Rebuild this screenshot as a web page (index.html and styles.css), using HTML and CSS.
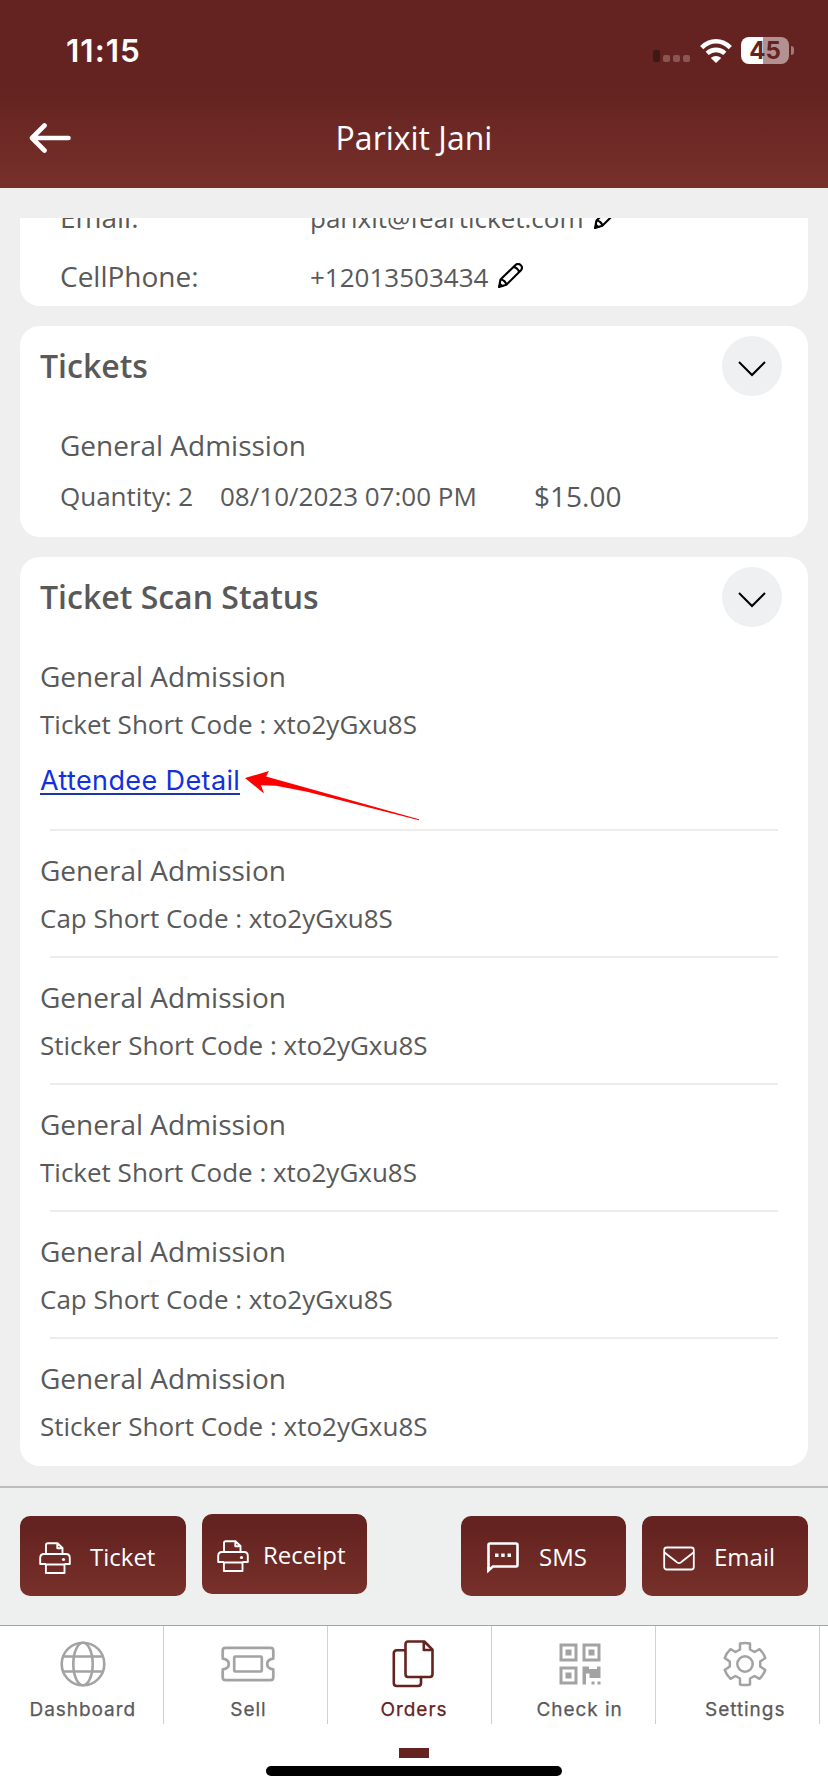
FILE: index.html
```html
<!DOCTYPE html>
<html lang="en">
<head>
<meta charset="utf-8">
<title>Order details</title>
<link rel="stylesheet" href="styles.css">
</head>
<body>
<svg class="defs" aria-hidden="true">
  <symbol id="chevron" viewBox="0 0 28 16"><path d="M1 1l13 13L27 1" fill="none" stroke="#000" stroke-width="2"/></symbol>
  <symbol id="pencil" viewBox="0 0 25 25"><path d="M1 24L2.500 16.500L17.500 2C19 .6 21 .6 22.600 2C24.300 3.600 24.300 5.700 23 7.200L8.300 21.800ZM2.500 16.500C5 16.500 8.300 19 8.300 21.800M15.500 4C18 4.200 20.800 6.500 21 9.200" fill="none" stroke="#000" stroke-width="2.100" stroke-linejoin="round"/><path d="M.5 24.500l1-5.500 4.500 4.300z"/></symbol>
  <symbol id="printer" viewBox="0 0 32 32"><g fill="none" stroke="#fff" stroke-width="1.900" stroke-linejoin="round"><path d="M7 12V3Q7 1.200 8.800 1.200H18.500L23.500 6V12M18.300 1.500V6.300H23.200"/><path d="M7 22H1.200V16Q1.200 12 5 12H27Q30.800 12 30.800 16V22H25.500"/><path d="M6.900 22.500H25.500V31H6.900Z"/></g><circle cx="24.500" cy="17.500" r="1.600" fill="#fff"/></symbol>
</svg>
<div class="screen">
  <header class="top">
    <div class="status">
      <span class="time">11:15</span>
      <div class="indicators">
        <svg class="signal" viewBox="0 0 38 12"><rect x="0" y="0" width="7" height="12" rx="2" fill="#3f1815"/><g fill="#8a5654"><rect x="10" y="5" width="7" height="7" rx="2"/><rect x="20" y="5" width="7" height="7" rx="2"/><rect x="30" y="5" width="7" height="7" rx="2"/></g></svg>
        <svg class="wifi" viewBox="0 0 32 24"><g fill="none" stroke="#fff" stroke-width="4.600"><path d="M1.700 8.600Q8 2.300 16 2.300T30.300 8.600"/><path d="M7.200 14.400Q11 10.900 16 10.900T24.800 14.400"/></g><path d="M16 24l-5.200-5.100Q13 17 16 17T21.200 18.900Z" fill="#fff"/></svg>
        <div class="battery"><span>45</span></div><i class="cap"></i>
      </div>
    </div>
    <div class="titlebar">
      <svg class="back" viewBox="0 0 42 30"><path d="M15.500 2.500L3 15L15.500 27.500M3.500 15H39.500" fill="none" stroke="#fff" stroke-width="4.600" stroke-linecap="round" stroke-linejoin="round"/></svg>
      <h1>Parixit Jani</h1>
    </div>
  </header>

  <main class="scroll">
    <section class="card contact">
      <div class="field"><span class="key">Email:</span><span class="val">parixit@fearticket.com</span><svg class="pencil"><use href="#pencil"/></svg></div>
      <div class="field"><span class="key">CellPhone:</span><span class="val">+12013503434</span><svg class="pencil"><use href="#pencil"/></svg></div>
    </section>

    <section class="card tickets">
      <div class="head"><h2>Tickets</h2><button class="toggle"><svg><use href="#chevron"/></svg></button></div>
      <div class="order">
        <p class="name">General Admission</p>
        <div class="line"><span class="qty">Quantity: 2</span><span class="date">08/10/2023 07:00 PM</span><span class="price">$15.00</span></div>
      </div>
    </section>

    <section class="card scans">
      <div class="head"><h2>Ticket Scan Status</h2><button class="toggle"><svg><use href="#chevron"/></svg></button></div>
      <div class="scan first">
        <p class="name">General Admission</p><p class="code">Ticket Short Code : xto2yGxu8S</p>
        <div class="linkrow"><a class="link">Attendee Detail</a>
          <svg class="arrow" viewBox="0 0 174 50"><path d="M0 7L24 0L21 5.500L174 48.300V49.300L62 20.800L31 14.700L16 14.300L19 22.500Z" fill="#f00"/></svg></div>
      </div>
      <div class="scan"><p class="name">General Admission</p><p class="code">Cap Short Code : xto2yGxu8S</p></div>
      <div class="scan"><p class="name">General Admission</p><p class="code">Sticker Short Code : xto2yGxu8S</p></div>
      <div class="scan"><p class="name">General Admission</p><p class="code">Ticket Short Code : xto2yGxu8S</p></div>
      <div class="scan"><p class="name">General Admission</p><p class="code">Cap Short Code : xto2yGxu8S</p></div>
      <div class="scan"><p class="name">General Admission</p><p class="code">Sticker Short Code : xto2yGxu8S</p></div>
    </section>
  </main>

  <div class="actions">
    <button class="action ticket"><svg><use href="#printer"/></svg><span>Ticket</span></button>
    <button class="action receipt"><svg><use href="#printer"/></svg><span>Receipt</span></button>
    <button class="action sms"><svg viewBox="0 0 32 32"><path d="M1.500 28V3Q1.500 1.500 3 1.500H29Q30.500 1.500 30.500 3V23Q30.500 24.500 29 24.500H6Z" fill="none" stroke="#fff" stroke-width="2.600"/><path d="M.3 25V31.500L6.500 25Z" fill="#fff"/><path d="M8 11.500h3.500V15H8zM14.200 11.500h3.500V15h-3.500zM20.500 11.500H24V15h-3.500z" fill="#fff"/></svg><span>SMS</span></button>
    <button class="action email"><svg viewBox="0 0 32 32"><g fill="none" stroke="#fff" stroke-width="1.800"><rect x="1.200" y="5.500" width="29.600" height="22" rx="2.500"/><path d="M1.500 10.500L13 19.500Q16 22.800 19 19.500L30.500 10.500"/></g></svg><span>Email</span></button>
  </div>

  <nav class="tabs">
    <a class="tab"><svg viewBox="0 0 54 48"><g fill="none" stroke="#a3a3a3" stroke-width="2.600"><circle cx="27" cy="24" r="21.300"/><ellipse cx="27" cy="24" rx="9.700" ry="21.300"/><path d="M7 16.500H47M7 31.500H47"/></g></svg><span>Dashboard</span></a>
    <a class="tab"><svg viewBox="0 0 54 48"><g fill="none" stroke="#a3a3a3" stroke-width="2.700" stroke-linejoin="round"><path d="M4.500 7.800H49.500Q52.300 7.800 52.300 10.500V18.600Q46.200 19.500 46.200 24T52.300 29.400V37.500Q52.300 40.200 49.500 40.200H4.500Q1.700 40.200 1.700 37.500V29.400Q7.800 28.500 7.800 24T1.700 18.600V10.500Q1.700 7.800 4.500 7.800Z"/><rect x="13.200" y="16.500" width="27.600" height="15" rx="1"/></g></svg><span>Sell</span></a>
    <a class="tab active"><svg viewBox="0 0 54 48"><g fill="none" stroke="#642320" stroke-width="2.600" stroke-linejoin="round" transform="translate(1.500 0)"><path d="M19.500 1.500H35.800L44 9.700V34Q44 37 41.200 37H19.500Q17 37 17 34V4.500Q17 1.500 19.500 1.500Z"/><path d="M35.300 1.500V10H43.700M17 10.300H8.300Q5.300 10.300 5.300 13.300V43Q5.300 46 8.300 46H29.500Q32.500 46 32.500 43V37"/></g></svg><span>Orders</span></a>
    <a class="tab"><svg viewBox="0 0 54 48"><g fill="none" stroke="#a3a3a3" stroke-width="3"><path d="M8 5h15v15H8zM31 5h15v15H31zM8 28h15v15H8z"/></g><path d="M12.500 9.500h6v6h-6zM35.500 9.500h6v6h-6zM12.500 32.500h6v6h-6zM29.500 26.500H36V29h8V26.500H47.500V38H36.500V33.500H33V44.500H29.500ZM38.500 41.500h3v3h-3zM44.500 41.500h3v3h-3z" fill="#a3a3a3"/></svg><span>Check in</span></a>
    <a class="tab"><svg viewBox="0 0 54 48"><g fill="none" stroke="#a3a3a3" stroke-width="2.500" stroke-linejoin="round"><path d="M22 3.500Q27 2.300 32 3.500V9.500L36.500 12L41.500 9.200Q45.500 13 47.300 18L42.200 21.500V26.500L47.300 30Q45.500 35 41.500 38.800L36.500 36L32 38.500V44.500Q27 45.700 22 44.500V38.500L17.500 36L12.500 38.800Q8.500 35 6.700 30L11.800 26.500V21.500L6.700 18Q8.500 13 12.500 9.200L17.500 12L22 9.500Z"/><circle cx="27" cy="24" r="7.700"/></g></svg><span>Settings</span></a>
  </nav>
  <footer class="bottom"><i class="marker"></i><i class="home"></i></footer>
</div>
</body>
</html>
```
FILE: styles.css
```css
* { box-sizing: border-box; }
body, h1, h2, p { margin: 0; }
button { border: 0; padding: 0; }
svg { display: block; flex: none; }
.defs { position: absolute; width: 0; height: 0; }

.screen {
  width: 828px;
  height: 1792px;
  display: flex;
  flex-direction: column;
  overflow: hidden;
  background: #efefef;
  color: #595959;
  font-family: "Open Sans", "Noto Sans", sans-serif;
}

/* Header */
.top {
  height: 188px;
  flex: none;
  color: #fff;
  background: linear-gradient(#642320 0, #642320 88px, #78302a 188px);
}
.status {
  height: 88px;
  padding: 13px 34px 0 66px;
  display: flex;
  align-items: center;
  justify-content: space-between;
}
.time { font: 600 31.500px/40px Inter, sans-serif; letter-spacing: 1px; }
.indicators { display: flex; align-items: center; }
.signal { width: 38px; height: 12px; margin: 10px 9px 0 0; }
.wifi { width: 32px; height: 24px; margin-right: 9px; }
.battery {
  width: 48px;
  height: 27px;
  border-radius: 8px;
  background: linear-gradient(90deg, #fff 22px, #b39190 22px);
  color: #642320;
  font: 700 24px/27px Inter, sans-serif;
  text-align: center;
}
.cap { width: 3px; height: 9px; margin-left: 2px; border-radius: 0 4px 4px 0; background: #a27a78; }
.titlebar { height: 100px; display: grid; grid-template-columns: 70px 1fr 70px; align-items: center; }
.back { width: 42px; height: 30px; margin-left: 29px; }
h1 { font-size: 32px; font-weight: 400; line-height: 60px; text-align: center; }

/* Scrolling cards */
.scroll {
  flex: 1;
  min-height: 0;
  margin-top: 30px;
  padding: 0 20px;
  overflow: hidden;
  display: flex;
  flex-direction: column;
  gap: 20px;
}
.card { flex: none; border-radius: 20px; background: #fff; }
.contact { height: 129px; margin-top: -41px; padding: 20px 40px 0; }
.field { height: 59px; display: flex; line-height: 40px; font-size: 28px; align-items: baseline; }
.key { width: 250px; }
.val { font-size: 26px; }
.pencil { width: 25px; height: 25px; margin-left: 10px; align-self: flex-start; margin-top: 7px; }

.head { height: 60px; display: flex; justify-content: space-between; }
h2 { font-size: 32px; font-weight: 600; line-height: 60px; }
.toggle {
  width: 60px;
  height: 60px;
  border-radius: 50%;
  background: #eff0f2;
  display: flex;
  justify-content: center;
  padding-top: 25px;
}
.toggle svg { width: 28px; height: 16px; }
.name { font-size: 28px; line-height: 40px; }
.code { font-size: 26px; line-height: 40px; }

.tickets { height: 211px; padding: 10px 26px 0 20px; }
.order { padding: 29px 0 0 20px; }
.line { display: flex; align-items: flex-start; margin-top: 11px; font-size: 26px; line-height: 40px; }
.qty { width: 160px; }
.date { width: 314px; }
.price { font-size: 28px; }

.scans { height: 909px; padding: 10px 26px 0 20px; }
.scan { padding: 21px 0 18px; display: flex; flex-direction: column; gap: 8px; }
.scan + .scan {
  background: linear-gradient(#ececec, #ececec) 10px 0 / 728px 2px no-repeat;
}
.first { padding: 29px 0; }
.linkrow { position: relative; height: 40px; margin-top: 8px; }
.link {
  display: inline-block;
  height: 35px;
  border-bottom: 2px solid #1b36ad;
  color: #1230dc;
  font: 400 27px/42px Inter, sans-serif;
  letter-spacing: .38px;
}
.arrow { position: absolute; left: 205px; top: 11px; width: 174px; height: 50px; }

/* Order actions */
.actions {
  height: 139px;
  flex: none;
  border-top: 2px solid #bdbdbd;
  padding: 28px 20px 0;
  display: flex;
  align-items: flex-start;
  background: #eeefef;
}
.action {
  width: 166px;
  height: 80px;
  border-radius: 10px;
  display: flex;
  align-items: center;
  background: linear-gradient(#642320 15%, #78302a);
  color: #fff;
  font: 400 24px/40px "Open Sans", sans-serif;
}
.action svg { width: 32px; height: 32px; }
.action span { margin-top: -3px; }
.ticket { padding: 4px 0 0 19px; gap: 19px; }
.receipt { width: 165px; margin: -2px 0 0 16px; padding: 4px 0 0 15px; gap: 14px; }
.sms { width: 165px; margin-left: 94px; padding: 4px 0 0 26px; gap: 20px; }
.email { margin-left: 16px; padding: 4px 0 0 21px; gap: 19px; }

/* Tab bar */
.tabs {
  flex: none;
  height: 99px;
  border-top: 1px solid #a3a3a3;
  display: grid;
  grid-template-columns: repeat(5, 1fr);
  background: repeating-linear-gradient(90deg, #fff 0 163px, #d0d0d0 163px 164px);
}
.tab {
  padding-top: 14px;
  display: flex;
  flex-direction: column;
  align-items: center;
  color: #595959;
  font: 400 19px/26px Inter, sans-serif;
  letter-spacing: .95px;
  -webkit-text-stroke: .25px currentColor;
}
.tab svg { width: 54px; height: 48px; }
.tab span { margin-top: 9px; }
.active { color: #642320; }
.bottom {
  flex: none;
  height: 68px;
  padding-top: 24px;
  display: flex;
  flex-direction: column;
  align-items: center;
  gap: 8px;
  background: #fff;
}
.marker { width: 30px; height: 10px; background: #642320; }
.home { width: 296px; height: 10px; border-radius: 5px; background: #000; }
```
